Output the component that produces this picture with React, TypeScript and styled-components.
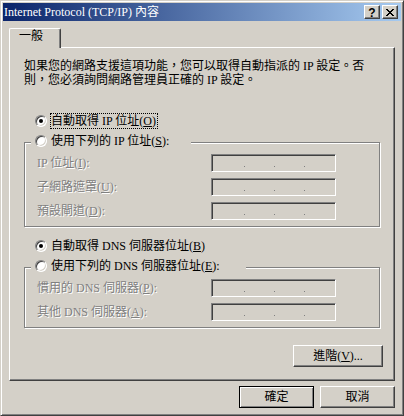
import React from 'react';
import styled, { createGlobalStyle } from 'styled-components';

const FACE = '#d4d0c8';

const GlobalStyle = createGlobalStyle`
    html, body {
        margin:0;
        padding:0;
        background:${FACE};
    }
    * {
        box-sizing:border-box;
    }
`;

const CLOSE_PIXELS = [
    'XX....XX',
    '.XX..XX.',
    '..XXXX..',
    '...XX...',
    '..XXXX..',
    '.XX..XX.',
    'XX....XX',
];

const CloseIcon = () => (
    <svg width="8" height="7" viewBox="0 0 8 7" shapeRendering="crispEdges">
        {CLOSE_PIXELS.map((row, y) =>
            row.split('').map((c, x) =>
                c === 'X' ? <rect key={`${x}-${y}`} x={x} y={y} width="1" height="1" fill="#000" /> : null
            )
        )}
    </svg>
);

const IpField = () => (
    <Field>
        <Dot />
        <Dot />
        <Dot />
    </Field>
);

const App = () => {
    return (
        <>
        <GlobalStyle />
        <Win>
            <TitleBar>
                <Title>Internet Protocol (TCP/IP) 內容</Title>
                <CapButton $gap={0}><Help>?</Help></CapButton>
                <CapButton $gap={2}><CloseIcon /></CapButton>
            </TitleBar>
            <Body>
                <TabStrip>
                    <Tab>一般</Tab>
                </TabStrip>
                <Panel>
                    <Desc>
                        如果您的網路支援這項功能，您可以取得自動指派的 IP 設定。否<br />
                        則，您必須詢問網路管理員正確的 IP 設定。
                    </Desc>

                    <RadioRow $top={26}>
                        <Radio $on />
                        <Label $focus>自動取得 IP 位址(<u>O</u>)</Label>
                    </RadioRow>
                    <Group>
                        <Legend $w={160}>
                            <Radio />
                            <Label>使用下列的 IP 位址(<u>S</u>):</Label>
                        </Legend>
                        <Rows>
                            <FieldLabel>IP 位址(<u>I</u>):</FieldLabel>
                            <IpField />
                            <FieldLabel>子網路遮罩(<u>U</u>):</FieldLabel>
                            <IpField />
                            <FieldLabel>預設閘道(<u>D</u>):</FieldLabel>
                            <IpField />
                        </Rows>
                    </Group>

                    <RadioRow $top={11}>
                        <Radio $on />
                        <Label>自動取得 DNS 伺服器位址(<u>B</u>)</Label>
                    </RadioRow>
                    <Group>
                        <Legend $w={215}>
                            <Radio />
                            <Label>使用下列的 DNS 伺服器位址(<u>E</u>):</Label>
                        </Legend>
                        <Rows>
                            <FieldLabel>慣用的 DNS 伺服器(<u>P</u>):</FieldLabel>
                            <IpField />
                            <FieldLabel>其他 DNS 伺服器(<u>A</u>):</FieldLabel>
                            <IpField />
                        </Rows>
                    </Group>

                    <AdvancedWrap>
                        <Button $w={90}>進階(<u>V</u>)...</Button>
                    </AdvancedWrap>
                </Panel>
                <ButtonRow>
                    <Button $w={75} $default>確定</Button>
                    <Button $w={75}>取消</Button>
                </ButtonRow>
            </Body>
        </Win>
        </>
    );
};

const Win = styled.div`
    width:404px;
    height:416px;
    display:flex;
    flex-direction:column;
    background:${FACE};
    border:1px solid;
    border-color:${FACE} #404040 #404040 ${FACE};
    box-shadow:inset 1px 1px #fff, inset -1px -1px #808080;
    padding:2px;
    font-family:"Liberation Serif", "Noto Sans CJK TC", serif;
    font-size:12px;
    line-height:14px;
    color:#000;
`;

const TitleBar = styled.div`
    height:18px;
    display:flex;
    align-items:center;
    padding:0 3px 0 1px;
    background:linear-gradient(to right, #0a246a, #a6caf0);
`;

const Title = styled.div`
    flex:1;
    color:#fff;
    white-space:nowrap;
    line-height:18px;
`;

const CapButton = styled.div<{ $gap: number }>`
    width:16px;
    height:14px;
    margin-left:${p => p.$gap}px;
    display:flex;
    align-items:center;
    justify-content:center;
    background:${FACE};
    border:1px solid;
    border-color:#fff #404040 #404040 #fff;
    box-shadow:inset -1px -1px #808080;
`;

const Help = styled.span`
    font-family:"Liberation Sans", sans-serif;
    font-weight:bold;
    font-size:12px;
    line-height:12px;
    margin-top:1px;
`;

const Body = styled.div`
    flex:1;
    display:flex;
    flex-direction:column;
    padding:7px 6px 0;
`;

const TabStrip = styled.div`
    display:flex;
    height:19px;
`;

const Tab = styled.div`
    position:relative;
    z-index:1;
    width:52px;
    height:20px;
    padding-left:9px;
    background:${FACE};
    border-top:1px solid #fff;
    border-left:1px solid #fff;
    border-right:1px solid #404040;
    box-shadow:inset -1px 0 #808080;
    border-radius:2px 2px 0 0;
    line-height:14px;
`;

const Panel = styled.div`
    height:334px;
    display:flex;
    flex-direction:column;
    border:1px solid;
    border-color:#fff #404040 #404040 #fff;
    box-shadow:inset -1px -1px #808080;
`;

const Desc = styled.div`
    margin:11px 0 0 14px;
    white-space:nowrap;
`;

const RadioRow = styled.div<{ $top: number }>`
    display:flex;
    align-items:center;
    height:16px;
    margin:${p => p.$top}px 0 0 25px;
`;

const Radio = styled.span<{ $on?: boolean }>`
    flex:none;
    width:12px;
    height:12px;
    border-radius:50%;
    background:#fff;
    border:1px solid;
    border-color:#808080 #fff #fff #808080;
    box-shadow:inset 1px 1px #404040, inset -1px -1px ${FACE};
    display:flex;
    align-items:center;
    justify-content:center;
    &::after {
        content:'';
        display:${p => (p.$on ? 'block' : 'none')};
        width:4px;
        height:4px;
        border-radius:50%;
        background:#000;
    }
`;

const Label = styled.span<{ $focus?: boolean }>`
    margin-left:3px;
    padding-right:1px;
    border:1px dotted ${p => (p.$focus ? '#000' : 'transparent')};
    white-space:nowrap;
    line-height:14px;
`;

const Group = styled.div`
    width:356px;
    margin:13px 0 0 14px;
    border:1px solid #808080;
    box-shadow:inset 1px 1px #fff, 1px 1px #fff;
    padding-bottom:6px;
`;

const Legend = styled.div<{ $w: number }>`
    width:${p => p.$w}px;
    height:16px;
    margin:-10px 0 0 6px;
    padding-left:4px;
    display:flex;
    align-items:center;
    background:${FACE};
`;

const Rows = styled.div`
    margin-top:5px;
    padding-left:12px;
    display:grid;
    grid-template-columns:174px 125px;
    row-gap:6px;
    align-items:center;
`;

const FieldLabel = styled.div`
    color:#808080;
    text-shadow:1px 1px 0 #fff;
    white-space:nowrap;
`;

const Field = styled.div`
    height:18px;
    display:flex;
    align-items:flex-start;
    gap:29px;
    padding:11px 0 0 32px;
    background:${FACE};
    border:1px solid;
    border-color:#808080 #fff #fff #808080;
    box-shadow:inset 1px 1px #404040, inset -1px -1px ${FACE};
`;

const Dot = styled.span`
    width:1px;
    height:1px;
    background:#808080;
`;

const AdvancedWrap = styled.div`
    display:flex;
    justify-content:flex-end;
    margin:17px 11px 0 0;
`;

const Button = styled.div<{ $w: number; $default?: boolean }>`
    width:${p => p.$w}px;
    height:22px;
    display:flex;
    align-items:center;
    justify-content:center;
    white-space:nowrap;
    background:${FACE};
    border:1px solid;
    border-color:${p => (p.$default ? '#000' : '#fff #404040 #404040 #fff')};
    box-shadow:${p => (p.$default
        ? 'inset 1px 1px #fff, inset -1px -1px #808080'
        : 'inset -1px -1px #808080')};
`;

const ButtonRow = styled.div`
    display:flex;
    justify-content:flex-end;
    gap:6px;
    margin-top:5px;
`;

export default App;
